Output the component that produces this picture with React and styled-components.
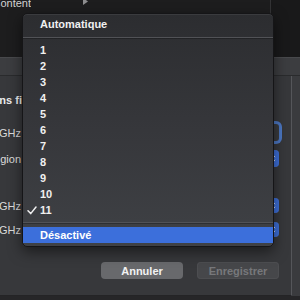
import React from 'react';
import styled, { createGlobalStyle } from 'styled-components';

const Global = createGlobalStyle`
  html, body { margin: 0; padding: 0; background: #262628; }
  body { font-family: "Liberation Sans", Arial, sans-serif; -webkit-font-smoothing: antialiased; }
  #root { width: 300px; height: 300px; }
`;

const Screen = styled.div`
  position: relative;
  width: 300px;
  height: 300px;
  overflow: hidden;
  display: flex;
  flex-direction: column;
  background: #262628;
`;

const BackPane = styled.div`
  height: 57px;
  flex-shrink: 0;
  display: flex;
  background: #1d1d1e;
`;

const Sidebar = styled.div`
  width: 270px;
  border-right: 1px solid #333335;
`;

const SideRow = styled.div`
  height: 10px;
  display: flex;
  align-items: flex-end;
  overflow: hidden;
`;

const SideLabel = styled.div`
  width: 31px;
  flex-shrink: 0;
  display: flex;
  justify-content: flex-end;
  overflow: hidden;
  white-space: nowrap;
  font-size: 11px;
  line-height: 13px;
  color: #d2d2d2;
`;

const Disclosure = styled.svg`
  margin-left: 52px;
  margin-bottom: 5px;
  flex-shrink: 0;
`;

const BackRight = styled.div`
  flex: 1;
  background: #19191a;
`;

const Window = styled.div`
  flex: 1;
  display: flex;
  flex-direction: column;
`;

const Toolbar = styled.div`
  height: 17px;
  flex-shrink: 0;
  background: #3c3d40;
  border-top: 1px solid #48494c;
  border-bottom: 1px solid #2a2b2d;
`;

const Content = styled.div`
  display: flex;
  height: 220px;
  flex-shrink: 0;
`;

const Panel = styled.div`
  width: 291px;
  height: 219px;
  border-right: 1px solid #55565a;
  border-bottom: 1px solid #242426;
  background: #37383b;
  display: flex;
  flex-direction: column;
`;

const Side = styled.div`
  flex: 1;
  background: #3a3b3e;
`;

const Row = styled.div`
  display: flex;
  align-items: center;
  height: ${p => p.$h || 17}px;
  margin-top: ${p => p.$top}px;
  padding-right: 12px;
  flex-shrink: 0;
`;

const Label = styled.div`
  width: ${p => p.$w || 21}px;
  flex-shrink: 0;
  display: flex;
  justify-content: flex-end;
  overflow: hidden;
  white-space: nowrap;
  font-size: 11px;
  font-weight: ${p => (p.$bold ? 700 : 400)};
  color: ${p => (p.$bold ? '#ececec' : '#dcdcdc')};
`;

const TextField = styled.div`
  flex: 1;
  margin-left: 60px;
  height: 100%;
  border-radius: 3px;
  background: #3a3b3e;
  box-shadow: 0 0 0 3px #4c77c2;
`;

const Popup = styled.div`
  flex: 1;
  margin-left: 60px;
  height: 100%;
  display: flex;
  border-radius: 4px;
  overflow: hidden;
  background: #5f6064;
`;

const PopupArrow = styled.div`
  margin-left: auto;
  width: 12px;
  height: 100%;
  background: #3d6fd9;
  display: flex;
  align-items: center;
  justify-content: center;
`;

const Footer = styled.div`
  display: flex;
  justify-content: flex-end;
  gap: 14px;
  margin-top: 25px;
  padding-right: 12px;
`;

const Button = styled.div`
  width: 82px;
  height: 17px;
  border-radius: 4px;
  display: flex;
  align-items: center;
  justify-content: center;
  font-size: 11px;
  font-weight: 700;
  background: ${p => (p.$disabled ? '#46474a' : '#68696c')};
  color: ${p => (p.$disabled ? '#77787b' : '#f2f2f2')};
  box-shadow: ${p => (p.$disabled ? 'inset 0 0 0 1px #4d4e51' : 'none')};
`;

const Menu = styled.div`
  position: absolute;
  left: 22px;
  top: 13px;
  width: 250px;
  padding: 2px 0 3px;
  border: 1px solid #151517;
  border-radius: 5px;
  background: linear-gradient(180deg, #2c2d30 0%, #35363a 45%, #3f4145 100%);
  box-shadow: 0 5px 14px rgba(0, 0, 0, 0.5), inset 0 1px 0 rgba(255, 255, 255, 0.07);
  display: flex;
  flex-direction: column;
`;

const Item = styled.div`
  height: 16px;
  display: flex;
  align-items: center;
  font-size: 11px;
  font-weight: 700;
  color: ${p => (p.$active ? '#ffffff' : '#f0f0f0')};
  background: ${p => (p.$active ? '#3c6fdb' : 'transparent')};
  white-space: nowrap;
`;

const CheckCell = styled.div`
  width: 17px;
  flex-shrink: 0;
  display: flex;
  align-items: center;
  padding-left: 4px;
  box-sizing: border-box;
`;

const Separator = styled.div`
  height: 1px;
  margin: ${p => p.$m};
  background: #515256;
  box-shadow: 0 1px 0 rgba(0, 0, 0, 0.25);
`;

const Chevrons = () => (
  <svg width="5" height="9" viewBox="0 0 5 9">
    <path d="M1 3.2 L2.5 1.6 L4 3.2 M1 5.8 L2.5 7.4 L4 5.8" stroke="#fff" strokeWidth="0.9" fill="none" />
  </svg>
);

const Check = () => (
  <svg width="10" height="9" viewBox="0 0 10 9">
    <path d="M1 4.8 L3.7 7.6 L9 1" stroke="#f0f0f0" strokeWidth="1.5" fill="none" strokeLinecap="round" strokeLinejoin="round" />
  </svg>
);

const channels = ['1', '2', '3', '4', '5', '6', '7', '8', '9', '10', '11'];

export default function App() {
  return (
    <>
      <Global />
      <Screen>
        <BackPane>
          <Sidebar>
            <SideRow>
              <SideLabel>Content</SideLabel>
              <Disclosure width="5" height="7" viewBox="0 0 5 7">
                <path d="M0 0 L5 3.5 L0 7 Z" fill="#8d8d8f" />
              </Disclosure>
            </SideRow>
          </Sidebar>
          <BackRight />
        </BackPane>
        <Window>
          <Toolbar />
          <Content>
            <Panel>
              <Row $top={17} $h={13}>
                <Label $bold $w={25}>Réseau sans fil</Label>
              </Row>
              <Row $top={18}>
                <Label>2,4 GHz</Label>
                <TextField />
              </Row>
              <Row $top={9}>
                <Label>Région</Label>
                <Popup><PopupArrow><Chevrons /></PopupArrow></Popup>
              </Row>
              <Row $top={31} $h={15}>
                <Label>2,4 GHz</Label>
                <Popup><PopupArrow><Chevrons /></PopupArrow></Popup>
              </Row>
              <Row $top={9} $h={15}>
                <Label>5 GHz</Label>
                <Popup><PopupArrow><Chevrons /></PopupArrow></Popup>
              </Row>
              <Footer>
                <Button>Annuler</Button>
                <Button $disabled>Enregistrer</Button>
              </Footer>
            </Panel>
            <Side />
          </Content>
        </Window>
        <Menu>
          <Item><CheckCell />Automatique</Item>
          <Separator $m="5px 0 4px" />
          {channels.map(c => (
            <Item key={c}>
              <CheckCell>{c === '11' && <Check />}</CheckCell>
              {c}
            </Item>
          ))}
          <Separator $m="4px 0 4px" />
          <Item $active><CheckCell />Désactivé</Item>
        </Menu>
      </Screen>
    </>
  );
}
